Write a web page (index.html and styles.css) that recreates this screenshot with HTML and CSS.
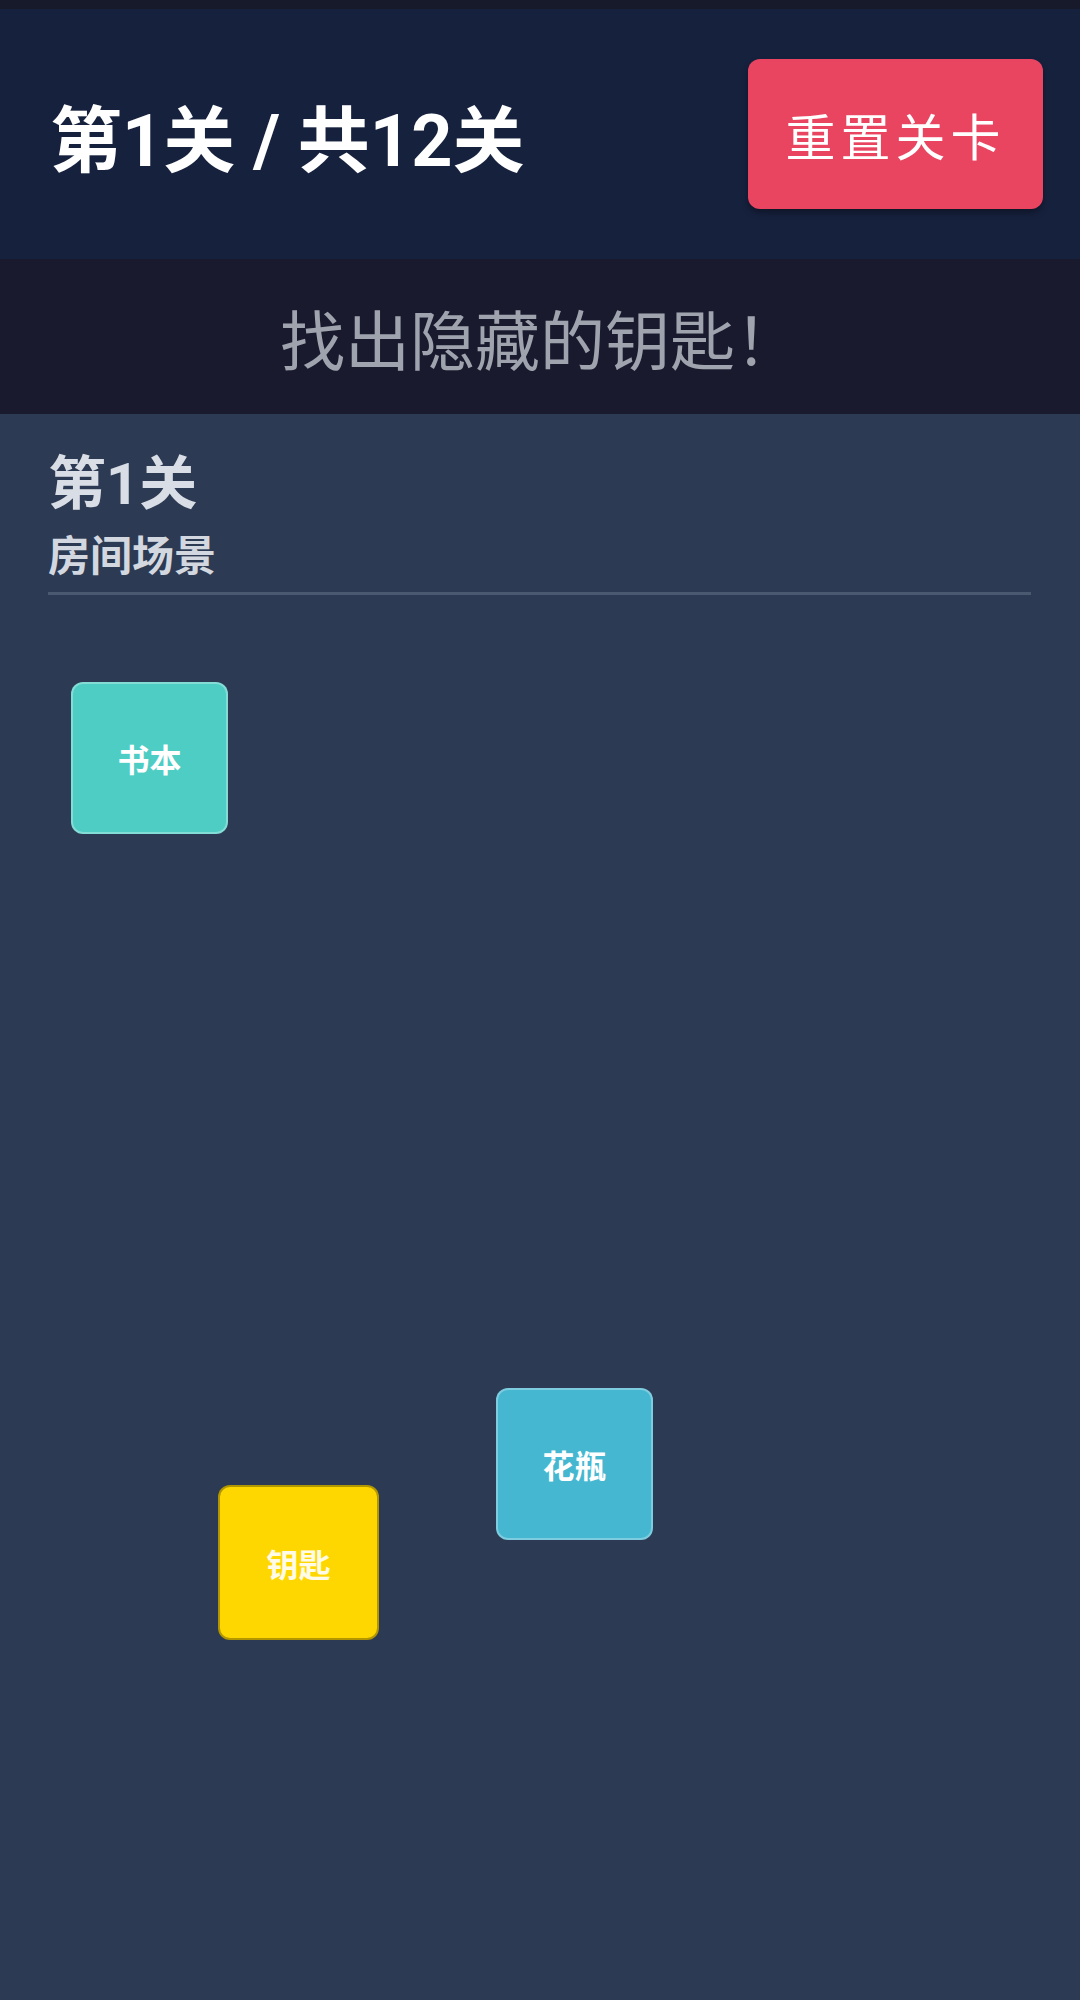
FILE: index.html
```html
<!DOCTYPE html>
<html lang="zh-CN">
<head>
    <meta charset="UTF-8">
    <title>找钥匙</title>
    <link rel="stylesheet" href="styles.css">
</head>
<body>
    <div class="status-strip"></div>
    <header class="top-bar">
        <h1 class="level-info">第1关 / 共12关</h1>
        <button class="reset-btn">重置关卡</button>
    </header>
    <div class="hint-bar">找出隐藏的钥匙！</div>
    <main class="stage">
        <h2 class="stage-title">第1关</h2>
        <p class="stage-sub">房间场景</p>
        <div class="divider"></div>
        <!-- scene items are placed on a free canvas -->
        <div class="scene">
            <div class="item item-book">书本</div>
            <div class="item item-vase">花瓶</div>
            <div class="item item-key">钥匙</div>
        </div>
    </main>
</body>
</html>
```

FILE: styles.css
```css
/* Base page */
body {
    margin: 0;
    background-color: #2c3b53;
    font-family: Roboto, "Noto Sans CJK SC", sans-serif;
    color: #ffffff;
}

.status-strip {
    height: 9px;
    background-color: #161a2b;
}

/* Header with level counter and reset button */
.top-bar {
    height: 250px;
    background-color: #16213e;
    display: flex;
    align-items: center;
    justify-content: space-between;
    padding: 0 37px 0 50px;
}
.level-info {
    margin: 0;
    font-size: 72px;
    font-weight: 700;
    color: #ffffff;
}
.reset-btn {
    width: 295px;
    height: 150px;
    border: none;
    border-radius: 12px;
    background-color: #e94560;
    color: #ffffff;
    font-family: "Noto Sans CJK SC", sans-serif;
    font-size: 50px;
    letter-spacing: 5px;
    box-shadow: 0 4px 6px rgba(0, 0, 0, 0.35);
    cursor: pointer;
}

/* Hint text */
.hint-bar {
    height: 155px;
    background-color: #1a1a2e;
    display: flex;
    align-items: center;
    justify-content: center;
    font-family: "Noto Sans CJK SC", sans-serif;
    font-size: 65px;
    color: #9ea3ad;
}

/* Play area */
.stage {
    background-color: #2c3b53;
    padding: 35px 49px 0 48px;
}
.stage-title {
    margin: 0;
    font-size: 58px;
    line-height: 70px;
    font-weight: 700;
    color: #d9dde5;
}
.stage-sub {
    margin: 13px 0 0;
    font-size: 42px;
    line-height: 50px;
    font-weight: 700;
    color: #d3d7df;
}
.divider {
    height: 3px;
    margin-top: 10px;
    background-color: #4a5870;
}

.scene {
    position: relative;
    height: 1450px;
}
.item {
    position: absolute;
    width: 153px;
    height: 148px;
    border: 2px solid rgba(255, 255, 255, 0.3);
    border-radius: 12px;
    display: flex;
    align-items: center;
    justify-content: center;
    font-family: "Noto Sans CJK SC", sans-serif;
    font-size: 32px;
    font-weight: 700;
    color: #ffffff;
    cursor: pointer;
}
.item-book {
    left: 23px;
    top: 87px;
    background-color: #4ecdc4;
}
.item-vase {
    left: 448px;
    top: 793px;
    background-color: #45b7d1;
}
.item-key {
    left: 170px;
    top: 890px;
    width: 157px;
    height: 151px;
    background-color: #ffd700;
    border-color: rgba(0, 0, 0, 0.3);
    color: #fffbe6;
}
```
